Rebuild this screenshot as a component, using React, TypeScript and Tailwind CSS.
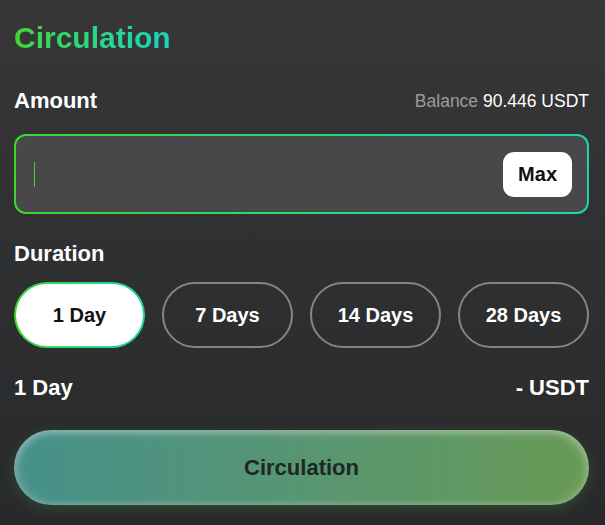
import { useState } from "react";

const durations = ["1 Day", "7 Days", "14 Days", "28 Days"];

export default function App() {
  const [selected, setSelected] = useState(0);

  return (
    <div
      className="w-full h-[525px] bg-gradient-to-b from-[#373738] to-[#28292b] pt-[23px] pl-[14px] pr-[16px] text-white"
      style={{ fontFamily: '"Liberation Sans", Arial, sans-serif' }}
    >
      {/* Titulo */}
      <h1 className="text-[30px] leading-[30px] font-bold">
        <span className="inline-block bg-gradient-to-r from-[#3fd62a] to-[#17d6bd] bg-clip-text text-transparent">
          Circulation
        </span>
      </h1>

      {/* Cantidad */}
      <div className="mt-[37px] flex h-[22px] items-center justify-between">
        <span className="text-[22px] leading-[22px] font-bold">Amount</span>
        <span className="text-[17.5px] leading-[17px]">
          <span className="text-[#9b9b9b]">Balance </span>
          <span className="text-white">90.446 USDT</span>
        </span>
      </div>

      <div className="mt-[22px] h-[80px] rounded-[12px] bg-gradient-to-r from-[#3fd62a] to-[#1ad6a8] p-[2px]">
        <div className="flex h-full items-center rounded-[10px] bg-[#48484a] pl-[18px] pr-[15px]">
          <span className="h-[25px] w-px bg-[#3fd62a]" />
          <div className="flex-1" />
          <button className="h-[45px] rounded-[11px] bg-white px-[15px] text-[20px] font-bold text-[#111]">
            Max
          </button>
        </div>
      </div>

      {/* Duracion */}
      <div className="mt-[29px] text-[22px] leading-[22px] font-bold">Duration</div>
      <div className="mt-[17px] grid grid-cols-4 gap-[17px]">
        {durations.map((d, i) =>
          i === selected ? (
            <div
              key={d}
              className="h-[66px] rounded-full bg-gradient-to-r from-[#3fd62a] to-[#1ad6a8] p-[2px]"
            >
              <button
                onClick={() => setSelected(i)}
                className="flex h-full w-full items-center justify-center rounded-full bg-white text-[20px] font-bold text-[#111]"
              >
                {d}
              </button>
            </div>
          ) : (
            <button
              key={d}
              onClick={() => setSelected(i)}
              className="flex h-[66px] items-center justify-center rounded-full border-2 border-[#858585] text-[20px] font-bold text-white"
            >
              {d}
            </button>
          )
        )}
      </div>

      <div className="mt-[29px] flex h-[22px] items-center justify-between text-[22px] leading-[22px] font-bold">
        <span>{durations[selected]}</span>
        <span>- USDT</span>
      </div>

      <button className="mt-[31px] h-[75px] w-full rounded-full bg-gradient-to-r from-[#46908b] to-[#689a55] text-[22px] font-bold text-[#1d2723] shadow-[inset_0_3px_8px_rgba(255,255,255,0.3),inset_6px_0_10px_rgba(255,255,255,0.12),inset_-6px_0_10px_rgba(255,255,255,0.12),0_4px_14px_rgba(60,110,50,0.45)]">
        Circulation
      </button>
    </div>
  );
}
